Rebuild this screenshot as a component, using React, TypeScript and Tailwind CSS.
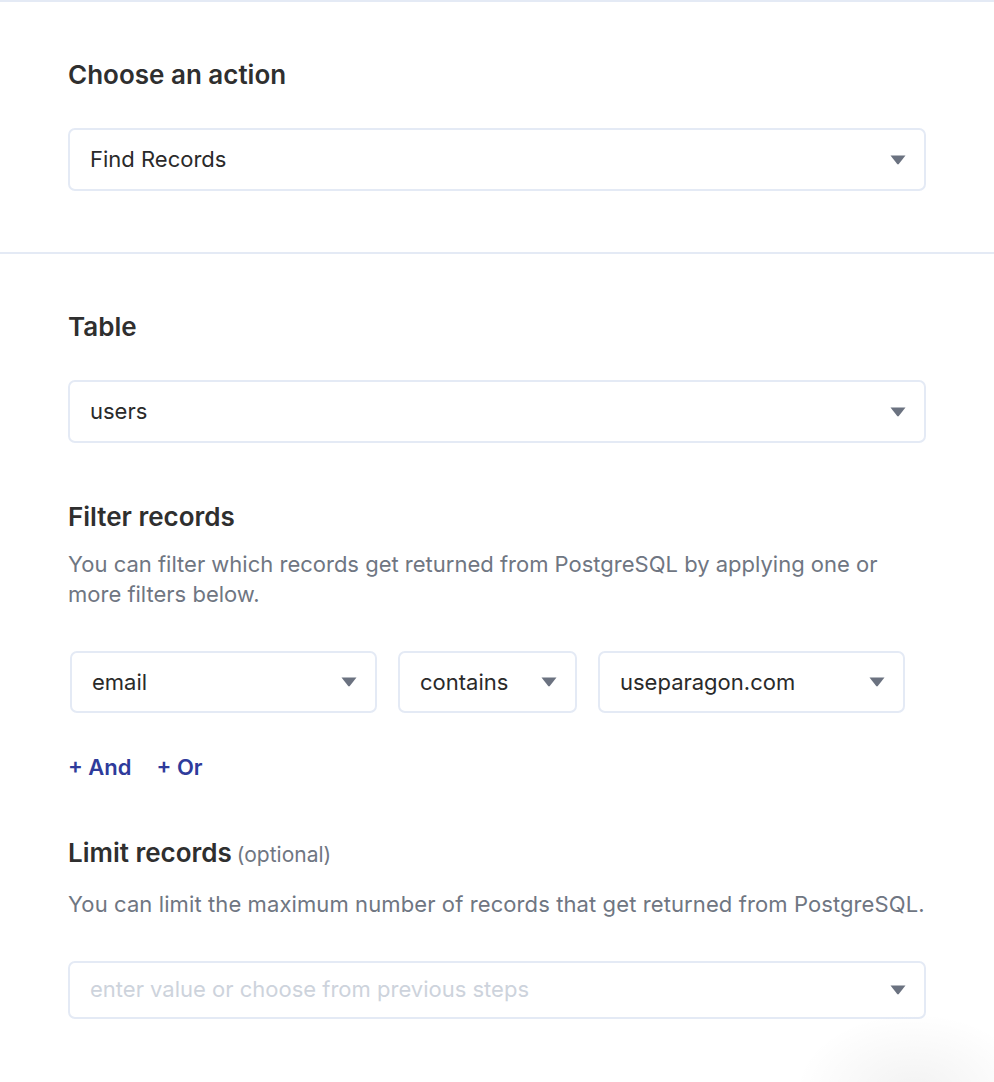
import { ReactNode } from "react";

function Caret() {
  return (
    <svg width="16" height="10" viewBox="0 0 16 10" className="shrink-0">
      <path d="M0.5 0.5 H15.5 L8.8 9 Q8 9.8 7.2 9 Z" fill="#6b7280" />
    </svg>
  );
}

interface SelectBoxProps {
  value?: string;
  placeholder?: string;
  className?: string;
}

function SelectBox({ value, placeholder, className = "" }: SelectBoxProps) {
  return (
    <div
      className={`flex items-center justify-between border-2 border-[#e4eaf5] rounded-[7px] bg-white pl-[20px] pr-[18px] ${className}`}
    >
      {value ? (
        <span className="text-[22px] text-[#2a2a2a]">{value}</span>
      ) : (
        <span className="text-[22px] text-[#cdd3dc]">{placeholder}</span>
      )}
      <Caret />
    </div>
  );
}

function Heading({ children }: { children: ReactNode }) {
  return (
    <h2 className="text-[26px] leading-[32px] font-semibold text-[#2f2f2f]">
      {children}
    </h2>
  );
}

export default function App() {
  return (
    <div
      className="relative w-[994px] h-[1082px] overflow-hidden bg-white"
      style={{ fontFamily: "Inter, 'Noto Sans', sans-serif" }}
    >
      <div className="border-t-2 border-[#e4eaf5] px-[68px] pt-[57px] pb-[61px]">
        <Heading>Choose an action</Heading>
        <SelectBox value="Find Records" className="mt-[37px] h-[63px]" />
      </div>

      <div className="border-t-2 border-[#e4eaf5] px-[68px] pt-[57px]">
        <Heading>Table</Heading>
        <SelectBox value="users" className="mt-[37px] h-[63px]" />

        <div className="mt-[58px]">
          <Heading>Filter records</Heading>
          <p className="mt-[16px] text-[22px] leading-[30px] text-[#6f7682] pr-[30px]">
            You can filter which records get returned from PostgreSQL by applying one or more filters below.
          </p>
        </div>

        <div className="mt-[42px] ml-[2px] flex gap-[21px]">
          <SelectBox value="email" className="w-[307px] h-[62px]" />
          <SelectBox value="contains" className="w-[179px] h-[62px]" />
          <SelectBox value="useparagon.com" className="w-[307px] h-[62px]" />
        </div>

        <div className="mt-[40px] flex gap-[25px] text-[22px] leading-[28px] font-semibold text-[#2e3b9b]">
          <span>+ And</span>
          <span>+ Or</span>
        </div>

        <div className="mt-[56px]">
          <div className="flex items-baseline gap-[5px]">
            <Heading>Limit records</Heading>
            <span className="text-[21px] text-[#6f7682]">(optional)</span>
          </div>
          <p className="mt-[18px] text-[22px] leading-[30px] text-[#6f7682] tracking-[0.1px]">
            You can limit the maximum number of records that get returned from PostgreSQL.
          </p>
        </div>

        <SelectBox
          placeholder="enter value or choose from previous steps"
          className="mt-[42px] h-[58px]"
        />
      </div>

      <div className="absolute right-[-40px] bottom-[-90px] w-[240px] h-[160px] rounded-full bg-[radial-gradient(ellipse_at_center,rgba(0,0,0,0.05),rgba(0,0,0,0)_70%)]" />
    </div>
  );
}
